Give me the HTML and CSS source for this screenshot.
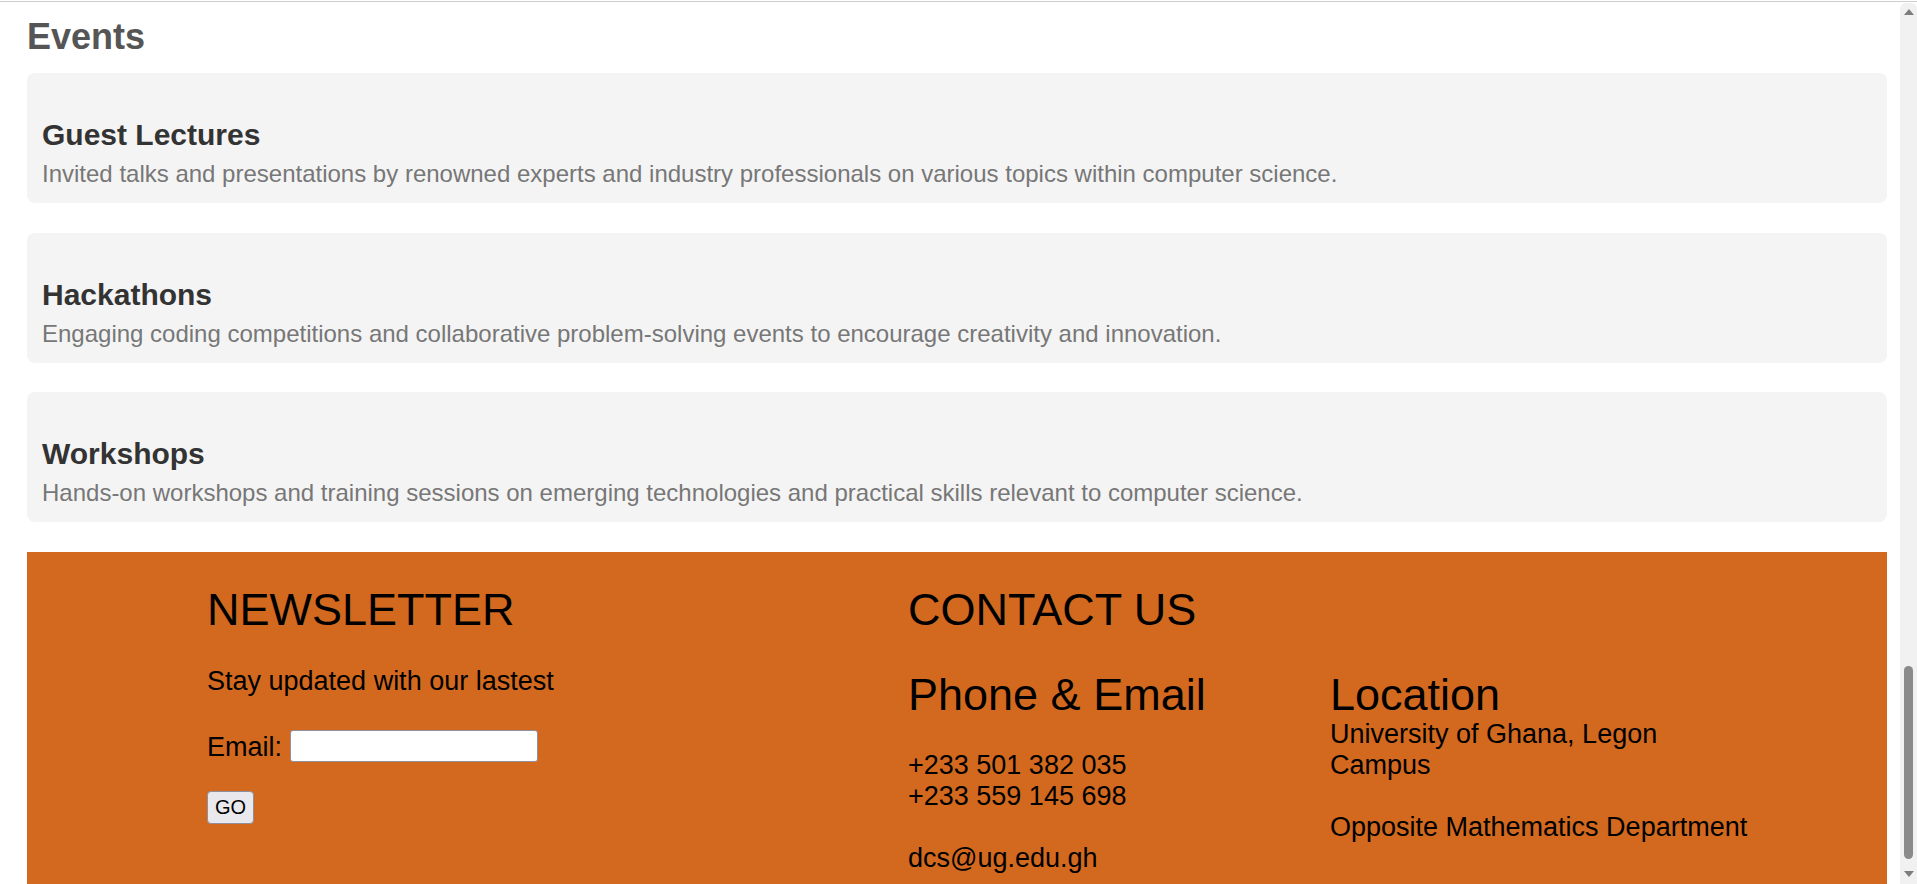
FILE: index.html
```html
<!DOCTYPE html>
<html lang="en">
<head>
<meta charset="utf-8">
<title>Events</title>
<link rel="stylesheet" href="styles.css">
</head>
<body>
<div class="frame">
  <div class="page">
    <main class="content">
      <h2 class="section-title">Events</h2>
      <article class="event-card">
        <h3 class="event-title">Guest Lectures</h3>
        <p class="event-text">Invited talks and presentations by renowned experts and industry professionals on various topics within computer science.</p>
      </article>
      <article class="event-card">
        <h3 class="event-title">Hackathons</h3>
        <p class="event-text">Engaging coding competitions and collaborative problem-solving events to encourage creativity and innovation.</p>
      </article>
      <article class="event-card">
        <h3 class="event-title">Workshops</h3>
        <p class="event-text">Hands-on workshops and training sessions on emerging technologies and practical skills relevant to computer science.</p>
      </article>
    </main>
    <footer class="footer">
      <section class="newsletter">
        <h2 class="footer-title">NEWSLETTER</h2>
        <p class="footer-text stay-text">Stay updated with our lastest</p>
        <form class="news-form">
          <div class="email-row"><label for="email">Email:</label> <input id="email" class="email-input" type="email"></div>
          <button type="button" class="go-btn">GO</button>
        </form>
      </section>
      <section class="contact">
        <h2 class="footer-title">CONTACT US</h2>
        <div class="contact-cols">
          <div class="phone-col">
            <h3 class="contact-sub">Phone &amp; Email</h3>
            <p class="footer-text phone-text">+233 501 382 035<br>+233 559 145 698<br><br>dcs@ug.edu.gh</p>
          </div>
          <div class="location-col">
            <h3 class="contact-sub">Location</h3>
            <p class="footer-text location-text">University of Ghana, Legon Campus<br><br>Opposite Mathematics Department</p>
          </div>
        </div>
      </section>
    </footer>
  </div>
  <div class="scrollbar">
    <span class="arrow-up"></span>
    <div class="track"><div class="thumb"></div></div>
    <span class="arrow-down"></span>
  </div>
</div>
</body>
</html>
```

FILE: styles.css
```css
* { box-sizing: border-box; }

html, body {
  margin: 0;
  height: 884px;
  overflow: hidden;
  background: #ffffff;
}

body {
  font-family: "Liberation Sans", Arial, Helvetica, sans-serif;
  border-top: 1px solid #ffffff;
}

.frame {
  display: flex;
  height: 883px;
  border-top: 1px solid #cdcdcd;
}

.page {
  flex: 1;
  display: flex;
  flex-direction: column;
  padding: 0 13px 0 27px;
  overflow: hidden;
}

.content {
  padding-top: 14px;
}

.section-title {
  margin: 0 0 16px;
  font-size: 36px;
  line-height: 41px;
  font-weight: bold;
  color: #555555;
}

.event-card {
  background: #f4f4f4;
  border-radius: 8px;
  padding: 15px 12px 15px 15px;
  margin-bottom: 29.5px;
}

.event-title {
  margin: 30px 0 8px;
  font-size: 30px;
  line-height: 34px;
  font-weight: bold;
  color: #333333;
}

.event-text {
  margin: 0;
  font-size: 24px;
  line-height: 28px;
  color: #777777;
}

.footer {
  flex: 1;
  display: flex;
  background: #d2691e;
  color: #000000;
  padding: 32px 0 0 180px;
}

.newsletter {
  width: 701px;
}

.footer-title {
  margin: 0;
  font-size: 45px;
  line-height: 52px;
  font-weight: normal;
}

.footer-text {
  font-size: 27px;
  line-height: 31px;
  margin: 28px 0 0;
}

.stay-text {
  margin-top: 30px;
}

.news-form {
  margin: 0;
}

.email-row {
  margin-top: 33px;
  font-size: 27px;
  line-height: 31px;
}

.email-input {
  width: 248px;
  height: 32px;
  font-size: 20px;
  font-family: inherit;
  border: 1px solid #8f8f9d;
  border-radius: 3px;
  background: #ffffff;
  padding: 1px 4px;
  vertical-align: 3px;
}

.go-btn {
  display: block;
  margin-top: 29px;
  width: 47px;
  height: 33px;
  padding: 0;
  font-family: inherit;
  font-size: 20px;
  color: #000000;
  background: #e9e9ed;
  border: 1px solid #8f8f9d;
  border-radius: 4px;
}

.contact-cols {
  display: flex;
}

.phone-col {
  width: 422px;
}

.location-col {
  width: 425px;
}

.contact-sub {
  margin: 33px 0 0;
  font-size: 45px;
  line-height: 52px;
  font-weight: normal;
}

.phone-text {
  margin-top: 29px;
}

.location-text {
  margin-top: -2px;
}

.scrollbar {
  width: 17px;
  margin-top: 1px;
  background: #f1f1f1;
  border-radius: 6px 6px 0 0;
  display: flex;
  flex-direction: column;
  align-items: center;
}

.arrow-up {
  margin-top: 6px;
  width: 0;
  height: 0;
  border-left: 5px solid transparent;
  border-right: 5px solid transparent;
  border-bottom: 6px solid #7d7d7d;
}

.track {
  flex: 1;
  width: 100%;
  display: flex;
  flex-direction: column;
  justify-content: flex-end;
  align-items: center;
  padding-bottom: 12px;
}

.thumb {
  width: 9px;
  height: 193px;
  background: #8a8a8a;
  border-radius: 5px;
}

.arrow-down {
  margin-bottom: 7px;
  width: 0;
  height: 0;
  border-left: 5px solid transparent;
  border-right: 5px solid transparent;
  border-top: 6px solid #7d7d7d;
}
```
